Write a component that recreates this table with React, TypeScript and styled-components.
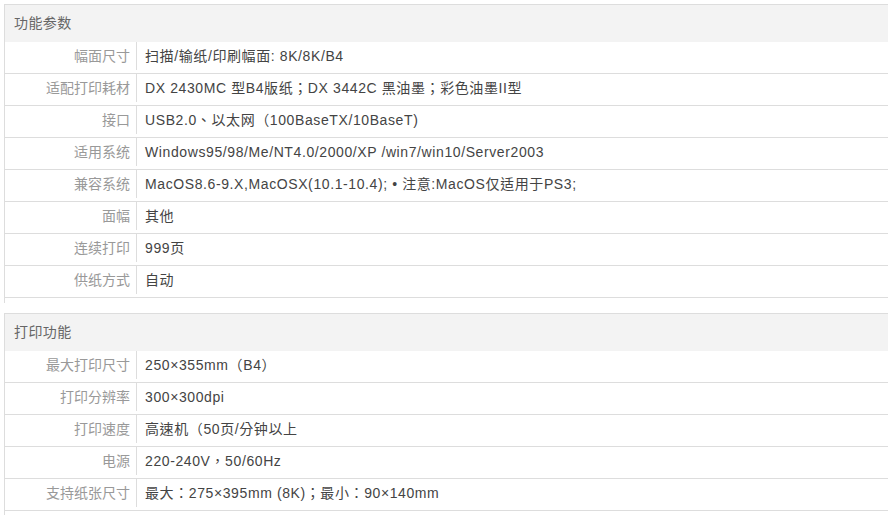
import React from "react";
import styled, {createGlobalStyle} from "styled-components";

const GlobalStyle = createGlobalStyle`
    html, body {
        margin: 0;
        padding: 0;
        background: #fff;
    }
    body {
        font-family: "Liberation Sans", "Noto Sans CJK SC", sans-serif;
        font-size: 14px;
    }
`;

const Page = styled.div`
    padding: 4px 6px 0 4px;
    width: 884px;
`;

const Section = styled.section`
    border-top: 1px solid #ddd;
    border-left: 1px solid #ddd;
    padding-bottom: 5px;
    margin-bottom: 10px;
`;

const Header = styled.div`
    height: 37px;
    line-height: 37px;
    padding-left: 9px;
    background: #f3f3f3;
    color: #666;
    font-size: 14px;
    letter-spacing: 0.4px;
`;

const Row = styled.div`
    display: flex;
    height: 31px;
    border-bottom: 1px solid #ddd;
`;

const Label = styled.div`
    width: 125px;
    height: 28px;
    line-height: 28px;
    padding-right: 6px;
    text-align: right;
    color: #999;
    border-right: 1px solid #ddd;
    flex-shrink: 0;
`;

const Value = styled.div`
    padding-left: 8px;
    line-height: 28px;
    color: #444;
    white-space: nowrap;
    letter-spacing: 0.6px;
    font-family: "Liberation Sans", "Noto Sans CJK TC", sans-serif;
`;

type Spec = [string, string];

const sections: {title: string, rows: Spec[]}[] = [
    {
        title: "功能参数",
        rows: [
            ["幅面尺寸", "扫描/输纸/印刷幅面: 8K/8K/B4"],
            ["适配打印耗材", "DX 2430MC 型B4版纸；DX 3442C 黑油墨；彩色油墨II型"],
            ["接口", "USB2.0、以太网（100BaseTX/10BaseT)"],
            ["适用系统", "Windows95/98/Me/NT4.0/2000/XP /win7/win10/Server2003"],
            ["兼容系统", "MacOS8.6-9.X,MacOSX(10.1-10.4); • 注意:MacOS仅适用于PS3;"],
            ["面幅", "其他"],
            ["连续打印", "999页"],
            ["供纸方式", "自动"],
        ],
    },
    {
        title: "打印功能",
        rows: [
            ["最大打印尺寸", "250×355mm（B4）"],
            ["打印分辨率", "300×300dpi"],
            ["打印速度", "高速机（50页/分钟以上"],
            ["电源", "220-240V，50/60Hz"],
            ["支持纸张尺寸", "最大：275×395mm (8K)；最小：90×140mm"],
        ],
    },
];

export default function App() {
    return (
        <>
            <GlobalStyle/>
            <Page>
                {sections.map((section) => (
                    <Section key={section.title}>
                        <Header>{section.title}</Header>
                        {section.rows.map(([label, value]) => (
                            <Row key={label}>
                                <Label>{label}</Label>
                                <Value>{value}</Value>
                            </Row>
                        ))}
                    </Section>
                ))}
            </Page>
        </>
    );
}
